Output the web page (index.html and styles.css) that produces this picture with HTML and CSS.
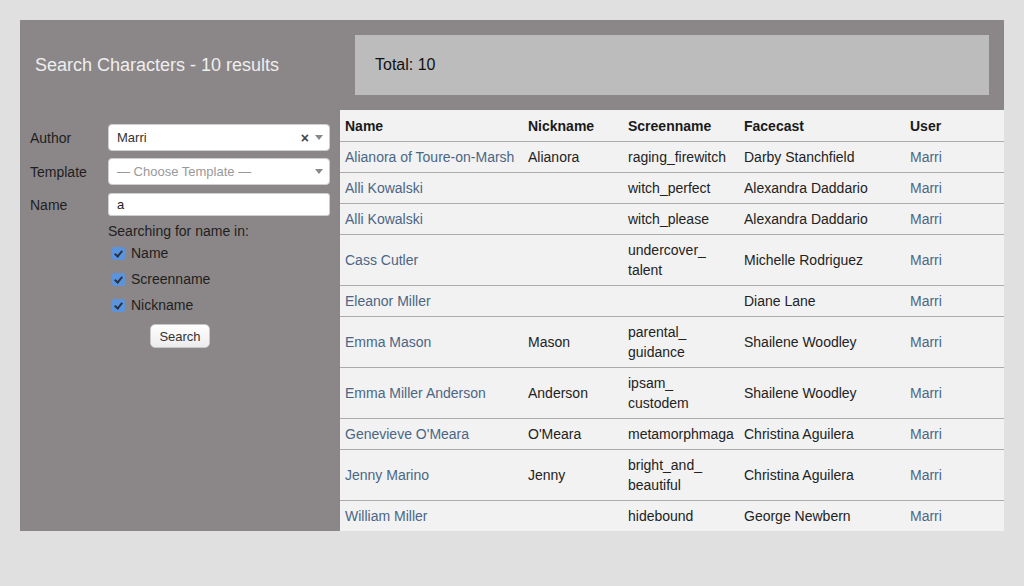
FILE: index.html
```html
<!DOCTYPE html>
<html>
<head>
<meta charset="utf-8">
<title>Search Characters</title>
<link rel="stylesheet" href="styles.css">
</head>
<body>
<div class="page">
  <div class="top">
    <h1 class="title">Search Characters - 10 results</h1>
    <div class="total">Total: 10</div>
  </div>
  <div class="main">
    <form class="search">
      <div class="field">
        <label class="label">Author</label>
        <div class="select">
          <span class="value">Marri</span>
          <span class="clear">×</span>
          <span class="arrow"></span>
        </div>
      </div>
      <div class="field">
        <label class="label">Template</label>
        <div class="select">
          <span class="value placeholder">— Choose Template —</span>
          <span class="arrow"></span>
        </div>
      </div>
      <div class="field">
        <label class="label">Name</label>
        <input class="text" type="text" value="a">
      </div>
      <div class="options">
        <div class="hint">Searching for name in:</div>
        <label class="check"><input type="checkbox" checked><span>Name</span></label>
        <label class="check"><input type="checkbox" checked><span>Screenname</span></label>
        <label class="check"><input type="checkbox" checked><span>Nickname</span></label>
        <div class="actions"><button type="button" class="btn">Search</button></div>
      </div>
    </form>
    <div class="results">
      <table class="grid">
        <colgroup>
          <col class="c-name"><col class="c-nick"><col class="c-screen"><col class="c-face"><col class="c-user">
        </colgroup>
        <thead>
          <tr><th>Name</th><th>Nickname</th><th>Screenname</th><th>Facecast</th><th>User</th></tr>
        </thead>
        <tbody>
          <tr><td><a href="#">Alianora of Toure-on-Marsh</a></td><td>Alianora</td><td>raging_firewitch</td><td>Darby Stanchfield</td><td><a href="#">Marri</a></td></tr>
          <tr><td><a href="#">Alli Kowalski</a></td><td></td><td>witch_perfect</td><td>Alexandra Daddario</td><td><a href="#">Marri</a></td></tr>
          <tr><td><a href="#">Alli Kowalski</a></td><td></td><td>witch_please</td><td>Alexandra Daddario</td><td><a href="#">Marri</a></td></tr>
          <tr><td><a href="#">Cass Cutler</a></td><td></td><td>undercover_<br>talent</td><td>Michelle Rodriguez</td><td><a href="#">Marri</a></td></tr>
          <tr><td><a href="#">Eleanor Miller</a></td><td></td><td></td><td>Diane Lane</td><td><a href="#">Marri</a></td></tr>
          <tr><td><a href="#">Emma Mason</a></td><td>Mason</td><td>parental_<br>guidance</td><td>Shailene Woodley</td><td><a href="#">Marri</a></td></tr>
          <tr><td><a href="#">Emma Miller Anderson</a></td><td>Anderson</td><td>ipsam_<br>custodem</td><td>Shailene Woodley</td><td><a href="#">Marri</a></td></tr>
          <tr><td><a href="#">Genevieve O'Meara</a></td><td>O'Meara</td><td>metamorphmaga</td><td>Christina Aguilera</td><td><a href="#">Marri</a></td></tr>
          <tr><td><a href="#">Jenny Marino</a></td><td>Jenny</td><td>bright_and_<br>beautiful</td><td>Christina Aguilera</td><td><a href="#">Marri</a></td></tr>
          <tr><td><a href="#">William Miller</a></td><td></td><td>hidebound</td><td>George Newbern</td><td><a href="#">Marri</a></td></tr>
        </tbody>
      </table>
    </div>
  </div>
</div>
</body>
</html>
```
FILE: styles.css
```css
html, body {
  margin: 0;
  padding: 0;
}
body {
  background: #e0e0e0;
  font-family: "Liberation Sans", Arial, sans-serif;
  font-size: 14px;
  color: #222;
  padding: 20px;
}
.page {
  width: 984px;
  background: #8b8788;
  display: flex;
  flex-direction: column;
}
.top {
  display: flex;
  height: 90px;
  align-items: stretch;
}
.title {
  width: 305px;
  margin: 0;
  padding-left: 15px;
  font-size: 18px;
  font-weight: normal;
  color: #eeeeee;
  display: flex;
  align-items: center;
}
.total {
  flex: 1;
  margin: 15px 15px 15px 15px;
  background: #bcbcbc;
  color: #111;
  font-size: 16px;
  padding-left: 20px;
  display: flex;
  align-items: center;
}
.main {
  display: flex;
  align-items: stretch;
}
.search {
  width: 300px;
  padding: 14px 10px 0 10px;
  display: flex;
  flex-direction: column;
}
.field {
  display: flex;
  align-items: center;
  margin-bottom: 7px;
}
.field:nth-child(2) {
  margin-bottom: 8px;
}
.field:nth-child(3) {
  margin-bottom: 6px;
}
.label {
  width: 78px;
  color: #1e1e1e;
}
.select {
  box-sizing: border-box;
  width: 222px;
  height: 27px;
  background: #fff;
  border: 1px solid #cfcfcf;
  border-radius: 4px;
  display: flex;
  align-items: center;
  padding: 0 6px 0 8px;
  font-size: 13px;
  color: #333;
}
.value {
  flex: 1;
}
.placeholder {
  color: #999;
}
.clear {
  font-size: 14px;
  font-weight: bold;
  color: #444;
  margin-right: 6px;
  line-height: 1;
}
.arrow {
  width: 0;
  height: 0;
  border-left: 4px solid transparent;
  border-right: 4px solid transparent;
  border-top: 5px solid #888;
}
.text {
  box-sizing: border-box;
  width: 222px;
  height: 23px;
  margin: 0;
  border: 1px solid #cfcfcf;
  border-radius: 3px;
  background: #fff;
  padding: 0 8px;
  font-family: "Liberation Sans", Arial, sans-serif;
  font-size: 13px;
  color: #222;
}
.options {
  margin-left: 78px;
}
.hint {
  line-height: 18px;
  color: #1e1e1e;
}
.check {
  display: flex;
  align-items: center;
  height: 26px;
  color: #1e1e1e;
}
.check input {
  -webkit-appearance: none;
  appearance: none;
  position: relative;
  box-sizing: border-box;
  width: 13px;
  height: 13px;
  margin: 0 6px 0 4px;
  border-radius: 2px;
  background: #5b93dd;
  border: none;
}
.check input::after {
  content: "";
  position: absolute;
  left: 4px;
  top: 2px;
  width: 3px;
  height: 6px;
  border-right: 2px solid #2a3340;
  border-bottom: 2px solid #2a3340;
  transform: rotate(40deg);
}
.actions {
  width: 144px;
  display: flex;
  justify-content: center;
  padding-top: 6px;
}
.btn {
  width: 60px;
  height: 24px;
  padding: 0;
  border: 1px solid #c8c8c8;
  border-radius: 5px;
  background: linear-gradient(#ffffff, #ececec);
  font-family: "Liberation Sans", Arial, sans-serif;
  font-size: 13px;
  color: #333;
}
.results {
  flex: 1;
  background: #f2f2f2;
}
.grid {
  width: 664px;
  table-layout: fixed;
  border-collapse: collapse;
}
.c-name { width: 183px; }
.c-nick { width: 100px; }
.c-screen { width: 116px; }
.c-face { width: 166px; }
.c-user { width: 99px; }
.grid th {
  text-align: left;
  font-weight: bold;
  color: #1a1a1a;
  padding: 6px 5px 5px 5px;
  line-height: 20px;
}
.grid td {
  padding: 5px 5px;
  line-height: 20px;
  border-top: 1px solid #ababab;
  vertical-align: middle;
  white-space: nowrap;
}
.grid a {
  color: #4b6685;
  text-decoration: none;
}
```
